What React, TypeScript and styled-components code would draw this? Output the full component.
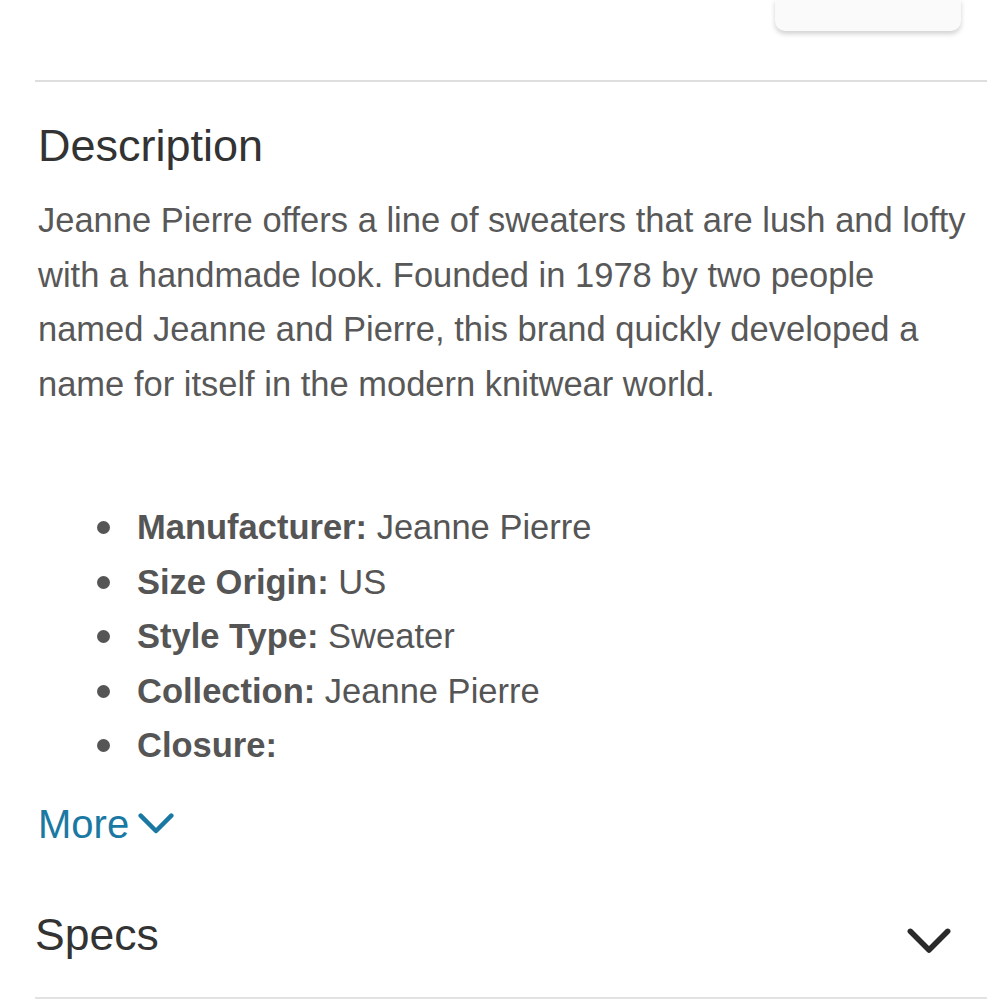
import styled, { createGlobalStyle } from "styled-components";

const Global = createGlobalStyle`
  html, body {
    margin: 0;
    padding: 0;
    background: #fff;
    font-family: "Liberation Sans", Arial, sans-serif;
  }
`;

const Page = styled.div`
  width: 1000px;
  height: 1000px;
  overflow: hidden;
  box-sizing: border-box;
  padding: 0 13px 0 35px;
  display: flex;
  flex-direction: column;
`;

const TopBar = styled.div`
  height: 80px;
  display: flex;
  justify-content: flex-end;
  align-items: flex-start;
  border-bottom: 2px solid #dedede;
  padding-right: 26px;
`;

const Card = styled.div`
  width: 186px;
  height: 32px;
  margin-top: -1px;
  background: #fafafa;
  border-radius: 0 0 10px 10px;
  box-shadow: 0 3px 5px rgba(0, 0, 0, 0.18);
`;

const Section = styled.section`
  padding: 36px 0 0 3px;
`;

const Heading = styled.h2`
  margin: 0;
  font-weight: 400;
  font-size: 45px;
  line-height: 56px;
  color: #333;
`;

const Body = styled.p`
  margin: 19px 0 0;
  font-size: 34.5px;
  line-height: 54.5px;
  color: #585858;
`;

const List = styled.ul`
  margin: 89px 0 0;
  padding: 0 0 0 99px;
  list-style: none;
  font-size: 34.5px;
  line-height: 54.5px;
  color: #555;
`;

const Item = styled.li`
  position: relative;
  &::before {
    content: "";
    position: absolute;
    left: -40px;
    top: 21px;
    width: 13px;
    height: 13px;
    border-radius: 50%;
    background: #555;
  }
`;

const Label = styled.b`
  font-weight: 700;
`;

const MoreLink = styled.a`
  display: inline-flex;
  align-items: center;
  gap: 9px;
  margin-top: 29px;
  font-size: 40px;
  color: #1a79a3;
  text-decoration: none;
`;

const SpecsRow = styled.div`
  margin-top: 40px;
  height: 112px;
  display: flex;
  align-items: center;
  justify-content: space-between;
  border-bottom: 2px solid #e2e2e2;
  padding-right: 36px;
  box-sizing: border-box;
`;

const SpecsTitle = styled.h2`
  margin: 0 0 14px;
  font-weight: 400;
  font-size: 44.5px;
  color: #333;
`;

const Chevron = ({ size, color, width }: { size: number; color: string; width: number }) => (
  <svg width={size} height={size * 0.6} viewBox="0 0 40 24" fill="none">
    <path d="M3 3 L20 20 L37 3" stroke={color} strokeWidth={width} strokeLinecap="round" strokeLinejoin="round" />
  </svg>
);

const specs = [
  { label: "Manufacturer:", value: "Jeanne Pierre" },
  { label: "Size Origin:", value: "US" },
  { label: "Style Type:", value: "Sweater" },
  { label: "Collection:", value: "Jeanne Pierre" },
  { label: "Closure:", value: "" },
];

export default function App() {
  return (
    <>
      <Global />
      <Page>
        <TopBar>
          <Card />
        </TopBar>
        <Section>
          <Heading>Description</Heading>
          <Body>
            Jeanne Pierre offers a line of sweaters that are lush and lofty with a handmade look. Founded in 1978 by two
            people named Jeanne and Pierre, this brand quickly developed a name for itself in the modern knitwear world.
          </Body>
          <List>
            {specs.map((s) => (
              <Item key={s.label}>
                <Label>{s.label}</Label> {s.value}
              </Item>
            ))}
          </List>
          <MoreLink href="#">
            More
            <Chevron size={36} color="#1a79a3" width={5} />
          </MoreLink>
        </Section>
        <SpecsRow>
          <SpecsTitle>Specs</SpecsTitle>
          <Chevron size={44} color="#2a2a2a" width={5} />
        </SpecsRow>
      </Page>
    </>
  );
}
